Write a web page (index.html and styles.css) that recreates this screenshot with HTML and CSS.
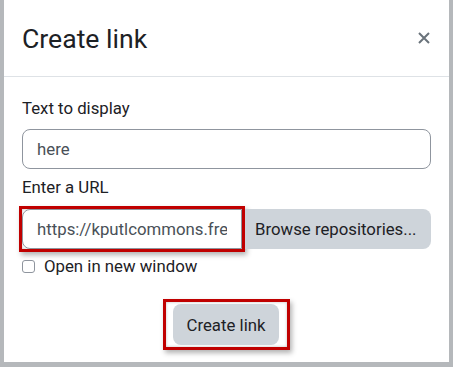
FILE: index.html
```html
<!DOCTYPE html>
<html lang="en">
<head>
  <meta charset="UTF-8">
  <meta name="viewport" content="width=device-width, initial-scale=1.0">
  <title>Create link</title>
  <link rel="stylesheet" href="styles.css">
</head>
<body>
  <div class="dialog">
    <div class="dialog-header">
      <h5 class="dialog-title">Create link</h5>
      <button class="close" aria-label="Close">
        <svg width="12" height="12" viewBox="0 0 12 12"><path d="M1 1 L11 11 M11 1 L1 11" stroke="#6a737b" stroke-width="2" fill="none"/></svg>
      </button>
    </div>
    <div class="dialog-body">
      <label class="field-label" for="linktext">Text to display</label>
      <input type="text" id="linktext" class="form-control" value="here">
      <label class="field-label" for="linkurl">Enter a URL</label>
      <div class="input-group">
        <span class="mark mark-url">
          <input type="text" id="linkurl" class="form-control url" value="https://kputlcommons.fre">
        </span>
        <button class="btn btn-browse">Browse repositories...</button>
      </div>
      <div class="form-check">
        <input type="checkbox" id="newwindow">
        <label for="newwindow">Open in new window</label>
      </div>
      <div class="dialog-footer">
        <span class="mark mark-submit">
          <button class="btn btn-submit">Create link</button>
        </span>
      </div>
    </div>
  </div>
</body>
</html>
```
FILE: styles.css
```css
* {
  box-sizing: border-box;
}
body {
  margin: 0;
  background: #b5b8bb;
  font-family: Roboto, "Liberation Sans", Arial, sans-serif;
  font-size: 16.8px;
  color: #1d2125;
  height: 367px;
  overflow: hidden;
}
.dialog {
  margin-left: 4px;
  width: 445px;
  height: 362px;
  background: #fff;
}
.dialog-header {
  height: 77px;
  display: flex;
  align-items: center;
  justify-content: space-between;
  padding: 0 19px 0 18px;
  border-bottom: 1px solid #dee2e6;
}
.dialog-title {
  margin: 0;
  font-size: 26.6px;
  font-weight: 400;
  line-height: 31px;
}
.close {
  border: none;
  background: none;
  padding: 0;
  width: 12px;
  height: 12px;
  display: flex;
}
.dialog-body {
  padding: 19px 18px 0 18px;
  display: flex;
  flex-direction: column;
}
.field-label {
  line-height: 24px;
  margin-bottom: 9px;
}
.form-control {
  height: 40px;
  width: 100%;
  border: 1px solid #8f959e;
  border-radius: 8px;
  padding: 0 14px;
  font: inherit;
  color: #495057;
  margin-bottom: 6px;
}
.input-group {
  display: flex;
  align-items: center;
  margin-left: -3px;
  margin-top: -2px;
}
.mark {
  display: inline-block;
  border: 3px solid #c00000;
  box-shadow: 2px 3px 5px rgba(0, 0, 0, 0.3), inset 0 0 3px rgba(0, 0, 0, 0.25);
}
.mark-url {
  flex: 1;
}
.form-control.url {
  margin: 0;
  display: block;
  border-radius: 8px 0 0 8px;
  padding-left: 14px;
}
.btn {
  border: none;
  font: inherit;
  color: #1d2125;
  background: #ced4da;
  height: 40px;
  cursor: pointer;
}
.btn-browse {
  width: 186px;
  padding: 0 0 0 10px;
  text-align: left;
  white-space: nowrap;
  border-radius: 0 8px 8px 0;
}
.form-check {
  display: flex;
  align-items: center;
  gap: 9px;
  margin-top: 2px;
  line-height: 24px;
}
.form-check input {
  appearance: none;
  margin: 0;
  width: 13px;
  height: 13px;
  border: 1px solid #8f959e;
  border-radius: 3px;
  background: #fff;
}
.dialog-footer {
  display: flex;
  justify-content: center;
  margin-top: 21px;
}
.mark-submit {
  padding: 2px 8px 2px 7px;
}
.btn-submit {
  display: block;
  height: 41px;
  padding: 0 14px;
  border-radius: 8px;
}
```
